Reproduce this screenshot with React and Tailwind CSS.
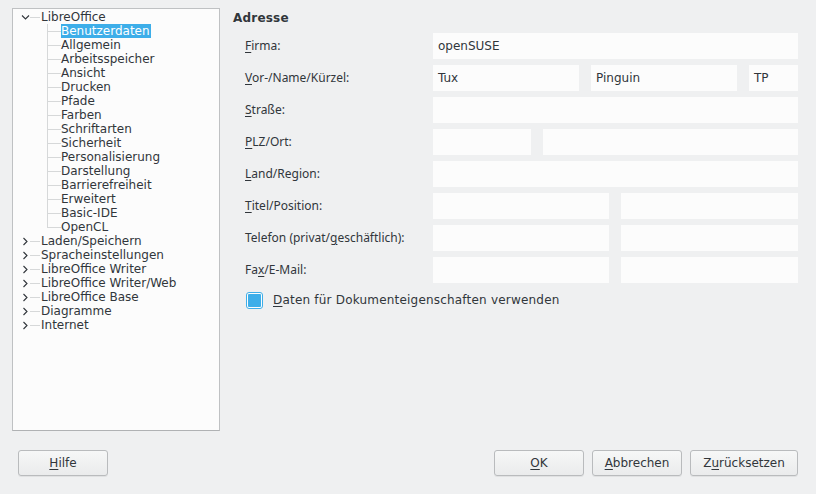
import React from 'react';

const children = [
  'Benutzerdaten', 'Allgemein', 'Arbeitsspeicher', 'Ansicht', 'Drucken', 'Pfade', 'Farben',
  'Schriftarten', 'Sicherheit', 'Personalisierung', 'Darstellung', 'Barrierefreiheit',
  'Erweitert', 'Basic-IDE', 'OpenCL',
];

const groups = [
  'Laden/Speichern', 'Spracheinstellungen', 'LibreOffice Writer', 'LibreOffice Writer/Web',
  'LibreOffice Base', 'Diagramme', 'Internet',
];

const vcl = { fontFamily: '"DejaVu Sans", "Noto Sans", sans-serif' };

function Chevron({ open }) {
  return (
    <svg width="9" height="9" viewBox="0 0 9 9" className="shrink-0">
      {open ? (
        <path d="M1 2.5 L4.5 6 L8 2.5" fill="none" stroke="#31363b" strokeWidth="1.1" />
      ) : (
        <path d="M2.5 1 L6 4.5 L2.5 8" fill="none" stroke="#31363b" strokeWidth="1.1" />
      )}
    </svg>
  );
}

// label with one underlined mnemonic letter
function Mn({ pre = '', k, post = '' }) {
  return (
    <span>
      {pre}
      <span className="underline underline-offset-2">{k}</span>
      {post}
    </span>
  );
}

function Field({ w, value }) {
  return (
    <div className={`${w} h-[26px] bg-[#fcfcfc] flex items-center px-[5px] text-[#31363b]`} style={vcl}>
      {value}
    </div>
  );
}

function Row({ label, children }) {
  return (
    <div className="flex items-center h-[26px]">
      <div className="w-[200px] pl-[12px] shrink-0">{label}</div>
      <div className="flex flex-1 gap-[12px]">{children}</div>
    </div>
  );
}

function Button({ w, children }) {
  return (
    <button
      className={`${w} h-[26px] rounded-[3px] border border-[#b9bbbd] bg-gradient-to-b from-[#f6f7f7] to-[#eaebec] shadow-[0_1px_0_rgba(0,0,0,0.06)] text-[#31363b]`}
      style={vcl}
    >
      {children}
    </button>
  );
}

export default function App() {
  return (
    <div
      className="w-[816px] h-[494px] bg-[#eff0f1] text-[12px] text-[#31363b] flex flex-col overflow-hidden"
      style={{ fontFamily: '"Noto Sans", "DejaVu Sans", sans-serif' }}
    >
      <div className="flex pt-[8px] pl-[12px] pr-[18px]">
        {/* options tree */}
        <div
          className="w-[208px] h-[423px] bg-[#fcfcfc] border border-[#bfc1c3] border-b-[#b0b2b4] pt-[1px] leading-[14px]"
          style={vcl}
        >
          <div className="relative">
            <div className="flex items-center h-[14px]">
              <div className="w-[8px]" />
              <Chevron open />
              <div className="w-[10px] h-[1px] bg-[#d6d8d9] mr-[1px]" />
              <span>LibreOffice</span>
            </div>
            <div className="absolute left-[34px] top-[14px] h-[203px] w-[1px] bg-[#d6d8d9]" />
            {children.map((c, i) => (
              <div key={c} className="flex items-center h-[14px]">
                <div className="w-[34px]" />
                <div className="w-[14px] h-[1px] bg-[#d6d8d9]" />
                <span className={i === 0 ? 'bg-[#3daee9] text-white pr-[1px]' : ''}>{c}</span>
              </div>
            ))}
            {groups.map((g) => (
              <div key={g} className="flex items-center h-[14px]">
                <div className="w-[8px]" />
                <Chevron />
                <div className="w-[10px] h-[1px] bg-[#d6d8d9] mr-[1px]" />
                <span>{g}</span>
              </div>
            ))}
          </div>
        </div>

        {/* form */}
        <div className="flex-1 ml-[13px]">
          <div className="font-bold h-[25px] pt-[3px] leading-[14px] tracking-[0.2px]" style={vcl}>Adresse</div>
          <div className="flex flex-col gap-[6px]">
            <Row label={<Mn k="F" post="irma:" />}>
              <Field w="flex-1" value="openSUSE" />
            </Row>
            <Row label={<Mn k="V" post="or-/Name/Kürzel:" />}>
              <Field w="w-[146px]" value="Tux" />
              <Field w="w-[146px]" value="Pinguin" />
              <Field w="flex-1" value="TP" />
            </Row>
            <Row label={<Mn k="S" post="traße:" />}>
              <Field w="flex-1" value="" />
            </Row>
            <Row label={<Mn k="P" post="LZ/Ort:" />}>
              <Field w="w-[98px]" value="" />
              <Field w="flex-1" value="" />
            </Row>
            <Row label={<Mn k="L" post="and/Region:" />}>
              <Field w="flex-1" value="" />
            </Row>
            <Row label={<Mn k="T" post="itel/Position:" />}>
              <Field w="w-[176px]" value="" />
              <Field w="flex-1" value="" />
            </Row>
            <Row label={<Mn pre="Telefon (privat/" k="g" post="eschäftlich):" />}>
              <Field w="w-[176px]" value="" />
              <Field w="flex-1" value="" />
            </Row>
            <Row label={<Mn pre="Fa" k="x" post="/E-Mail:" />}>
              <Field w="w-[176px]" value="" />
              <Field w="flex-1" value="" />
            </Row>
          </div>
          <div className="flex items-center mt-[8px] pl-[13px] h-[18px]">
            <div className="w-[17px] h-[17px] rounded-[3px] border border-[#3daee9] bg-[#fcfcfc] flex items-center justify-center">
              <div className="w-[13px] h-[13px] rounded-[1px] bg-[#3daee9]" />
            </div>
            <span className="ml-[10px] tracking-[0.2px]" style={vcl}>
              <Mn k="D" post="aten für Dokumenteigenschaften verwenden" />
            </span>
          </div>
        </div>
      </div>

      {/* buttons */}
      <div className="flex items-center mt-[19px] pl-[18px] pr-[18px]">
        <Button w="w-[90px]"><Mn k="H" post="ilfe" /></Button>
        <div className="flex-1" />
        <div className="flex gap-[8px]">
          <Button w="w-[90px]"><Mn k="O" post="K" /></Button>
          <Button w="w-[90px]"><Mn k="A" post="bbrechen" /></Button>
          <Button w="w-[108px]"><Mn pre="Z" k="u" post="rücksetzen" /></Button>
        </div>
      </div>
    </div>
  );
}
